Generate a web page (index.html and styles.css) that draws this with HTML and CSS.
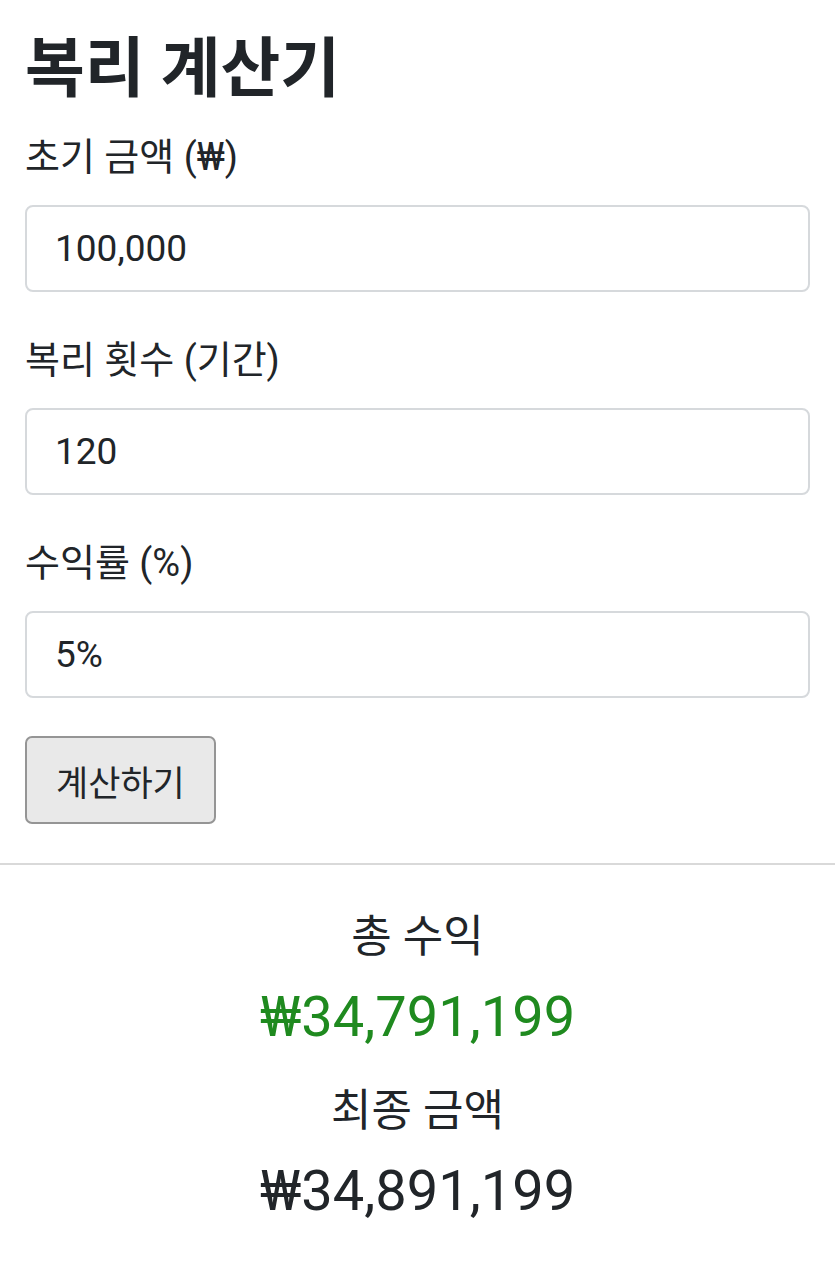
FILE: index.html
```html
<!DOCTYPE html>
<html lang="ko">
<head>
  <meta charset="UTF-8" />
  <meta name="viewport" content="width=device-width, initial-scale=1.0"/>
  <title>복리 계산기</title>
  <link rel="stylesheet" href="styles.css">
</head>
<body>

<div class="calc">
  <h1>복리 계산기</h1>

  <div class="form-control">
    <label for="principal">초기 금액 (₩)</label>
    <input type="text" id="principal" name="principal" value="100,000" />
  </div>

  <div class="form-control">
    <label for="periods">복리 횟수 (기간)</label>
    <input type="text" id="periods" name="periods" value="120" />
  </div>

  <div class="form-control">
    <label for="rate">수익률 (%)</label>
    <input type="text" id="rate" name="rate" value="5%" />
  </div>

  <button type="button" id="calc-btn">계산하기</button>
</div>

<hr class="divider" />

<div class="result">
  <div class="result-label">총 수익</div>
  <div class="result-value profit" id="profit">₩34,791,199</div>
  <div class="result-label">최종 금액</div>
  <div class="result-value" id="total">₩34,891,199</div>
</div>

</body>
</html>
```

FILE: styles.css
```css
body {
  margin: 0;
  font-family: Roboto, "Noto Sans CJK KR", sans-serif;
  color: #212529;
  background: #fff;
}
.calc { padding: 0 25px; }
h1 {
  margin: 33px 0 25px;
  font-size: 65px;
  line-height: 72px;
  font-weight: bold;
}
.form-control { margin-bottom: 41px; }
.form-control label {
  display: block;
  font-size: 38px;
  line-height: 54px;
  margin-bottom: 21px;
}
.form-control input {
  display: block;
  width: 100%;
  height: 87px;
  box-sizing: border-box;
  padding: 0 28px;
  border: 2px solid #d6d9dc;
  border-radius: 8px;
  font-family: inherit;
  font-size: 37px;
  color: #212529;
  background: #fff;
  outline: none;
}
#calc-btn {
  height: 88px;
  padding: 0 29px;
  margin-top: -3px;
  border: 2px solid #959595;
  border-radius: 7px;
  background: #e9e9e9;
  font-family: inherit;
  font-size: 35px;
  color: #212529;
}
.divider {
  margin: 39px 0 0;
  border: 0;
  border-top: 2px solid #d9d9d9;
}
.result { text-align: center; padding-top: 42px; }
.result-label { font-size: 44px; line-height: 60px; }
.result-value {
  font-size: 56px;
  line-height: 76px;
  margin: 12px 0 26px;
}
.profit { color: #1f8a1f; }
```
